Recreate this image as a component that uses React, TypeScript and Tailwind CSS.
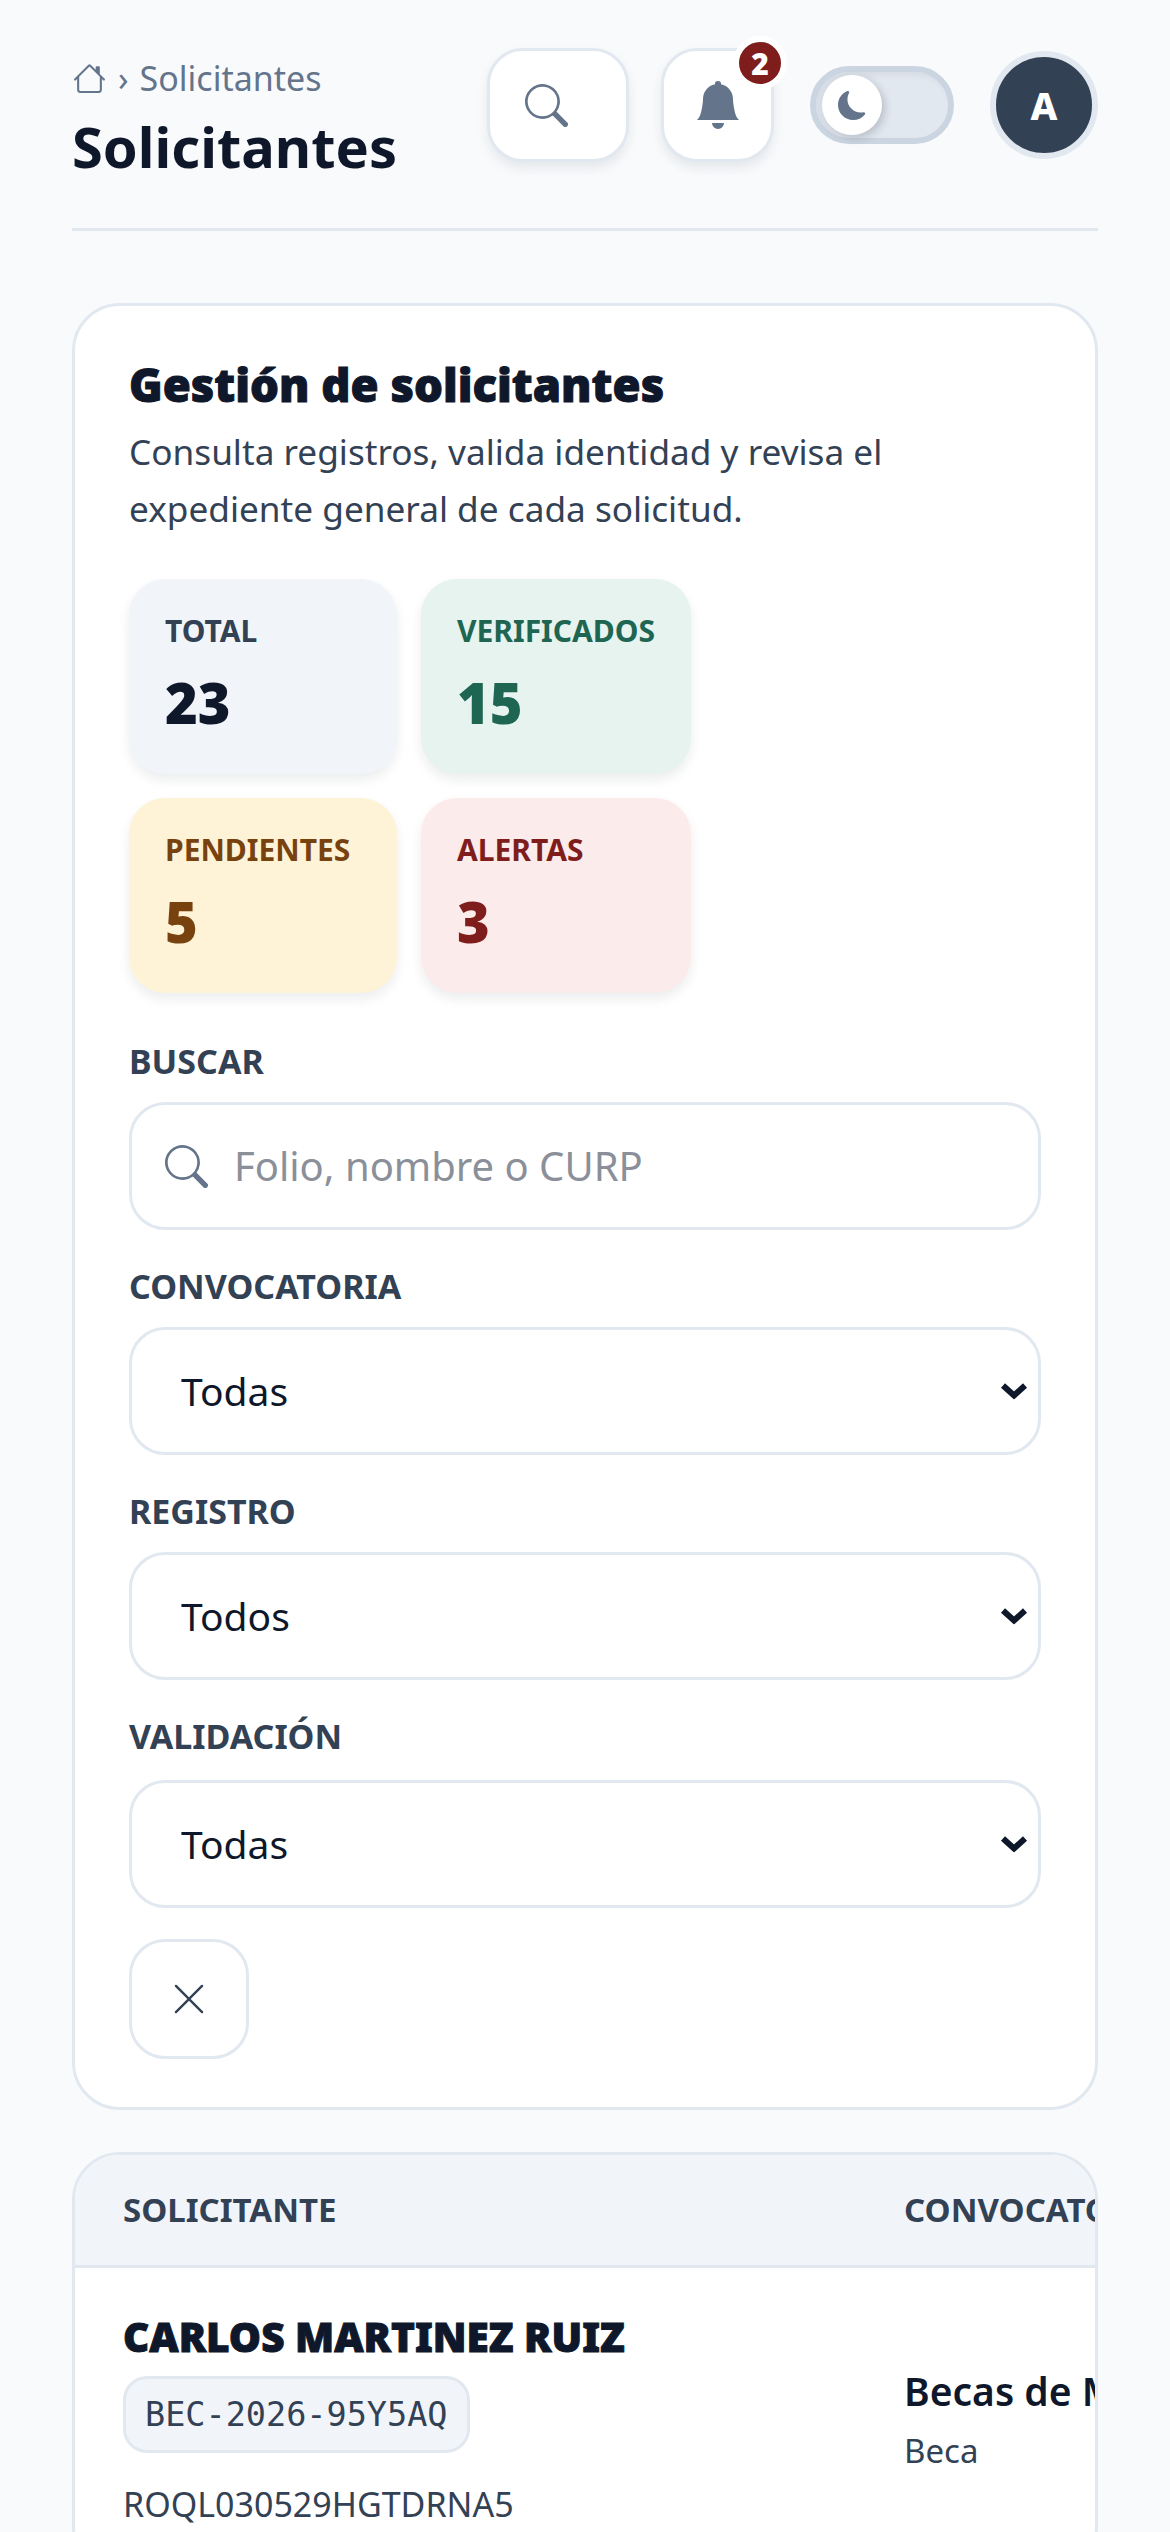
import React from 'react';
import { BsBellFill, BsHouse, BsMoonFill, BsSearch, BsXLg } from 'react-icons/bs';

const sans = { fontFamily: '"Noto Sans", "Open Sans", sans-serif' };

interface Stat {
  label: string;
  value: number;
  box: string;
  labelColor: string;
  valueColor: string;
}

const stats: Stat[] = [
  { label: 'TOTAL', value: 23, box: 'bg-[#f1f5f9]', labelColor: 'text-[#334155]', valueColor: 'text-[#0f172a]' },
  { label: 'VERIFICADOS', value: 15, box: 'bg-[#e6f3ee]', labelColor: 'text-[#1e6552]', valueColor: 'text-[#1e6552]' },
  { label: 'PENDIENTES', value: 5, box: 'bg-[#fef3d6]', labelColor: 'text-[#78420f]', valueColor: 'text-[#78420f]' },
  { label: 'ALERTAS', value: 3, box: 'bg-[#fcebeb]', labelColor: 'text-[#7f1d1d]', valueColor: 'text-[#7f1d1d]' },
];

const FieldLabel = ({ children, tall }: { children: React.ReactNode; tall?: boolean }) => (
  <label className={`block text-[34px] leading-[45px] font-bold text-[#334155] ${tall ? 'mb-[21px]' : 'mb-[18px]'}`}>
    {children}
  </label>
);

const SelectField = ({ label, value, tall }: { label: string; value: string; tall?: boolean }) => (
  <div className="mb-[34px]">
    <FieldLabel tall={tall}>{label}</FieldLabel>
    <div className="relative">
      <select
        defaultValue={value}
        className="appearance-none block w-full h-[128px] pl-[49px] pr-[60px] bg-white border-[3px] border-[#e2e8f0] rounded-[36px] text-[39px] text-[#0f172a] outline-none"
        style={sans}
      >
        <option>{value}</option>
      </select>
      {/* native-looking arrow, the built-in one doesn't scale with the text */}
      <svg
        viewBox="0 0 28 17"
        className="absolute right-[13px] top-1/2 -translate-y-1/2 w-[28px] h-[17px] text-[#0f172a] pointer-events-none"
      >
        <path d="M3 3 L14 13 L25 3" fill="none" stroke="currentColor" strokeWidth={6} />
      </svg>
    </div>
  </div>
);

const App: React.FC = () => {
  return (
    <div className="h-[2532px] overflow-hidden bg-[#f8fafc] px-[72px] pt-[48px]" style={sans}>
      <header className="flex justify-between items-start h-[183px] border-b-[3px] border-[#e2e8f0]">
        <div className="pt-[8px]">
          <div className="flex items-center h-[45px] text-[34px] text-[#64748b]">
            <BsHouse className="w-[33px] h-[33px] ml-[1px] mr-[12px]" />
            <span className="mr-[11px]">›</span>
            <span>Solicitantes</span>
          </div>
          <h1 className="text-[56px] leading-[78px] font-bold text-[#0f172a] mt-[6px]">Solicitantes</h1>
        </div>
        <div className="flex items-center">
          <button className="flex items-center w-[142px] h-[114px] pl-[35px] bg-white border-[3px] border-[#e2e8f0] rounded-[36px] shadow-[0_6px_12px_rgba(15,23,42,0.08)]">
            <BsSearch className="w-[43px] h-[43px] text-[#64748b]" />
          </button>
          <button className="relative flex items-center justify-center w-[113px] h-[114px] ml-[32px] bg-white border-[3px] border-[#e2e8f0] rounded-[36px] shadow-[0_6px_12px_rgba(15,23,42,0.08)]">
            <BsBellFill className="w-[48px] h-[48px] text-[#64748b]" />
            <span className="absolute -top-[15px] -right-[16px] flex items-center justify-center w-[54px] h-[54px] rounded-full bg-[#7f1d1d] border-[6px] border-white text-white text-[30px] font-black">
              2
            </span>
          </button>
          <div className="flex items-center w-[144px] h-[78px] ml-[36px] pl-[6px] bg-[#e2e8f0] border-[6px] border-[#cbd5e1] rounded-full shadow-[inset_3px_3px_6px_rgba(15,23,42,0.06)]">
            <span className="flex items-center justify-center w-[60px] h-[60px] rounded-full bg-white shadow-[3px_3px_9px_rgba(15,23,42,0.2)]">
              <BsMoonFill className="w-[29px] h-[29px] text-[#64748b]" />
            </span>
          </div>
          <div className="flex items-center justify-center w-[108px] h-[108px] ml-[36px] rounded-full bg-[#334155] border-[6px] border-[#e2e8f0] text-white text-[38px] font-extrabold">
            A
          </div>
        </div>
      </header>

      <section className="mt-[72px] bg-white border-[3px] border-[#e2e8f0] rounded-[48px] px-[54px] pt-[48px] pb-[48px]">
        <h2 className="text-[45.5px] leading-[60px] font-black text-[#0f172a] [-webkit-text-stroke:1px_#0f172a]">
          Gestión de solicitantes
        </h2>
        <p className="text-[35.2px] leading-[57px] text-[#334155] mt-[9px]">
          Consulta registros, valida identidad y revisa el expediente general de cada solicitud.
        </p>

        <div className="grid grid-cols-[268px_270px] gap-[24px] mt-[42px]">
          {stats.map((s) => (
            <div
              key={s.label}
              className={`${s.box} h-[195px] px-[36px] pt-[31px] rounded-[36px] shadow-[0_6px_12px_rgba(15,23,42,0.08)]`}
            >
              <div className={`${s.labelColor} text-[30px] leading-[42px] font-bold`}>{s.label}</div>
              <div className={`${s.valueColor} text-[56px] leading-[72px] font-black mt-[14px]`}>{s.value}</div>
            </div>
          ))}
        </div>

        <div className="mt-[46px] mb-[34px]">
          <FieldLabel>BUSCAR</FieldLabel>
          <div className="flex items-center h-[128px] pl-[33px] bg-white border-[3px] border-[#e2e8f0] rounded-[36px]">
            <BsSearch className="w-[43px] h-[43px] text-[#64748b] shrink-0" />
            <input
              placeholder="Folio, nombre o CURP"
              className="w-full ml-[26px] text-[40px] text-[#0f172a] placeholder:text-[#8a8f99] outline-none"
              style={sans}
            />
          </div>
        </div>

        <SelectField label="CONVOCATORIA" value="Todas" />
        <SelectField label="REGISTRO" value="Todos" />
        <SelectField label="VALIDACIÓN" value="Todas" tall />

        <button className="flex items-center justify-center w-[120px] h-[120px] -mt-[3px] bg-white border-[3px] border-[#e2e8f0] rounded-[36px]">
          <BsXLg className="w-[38px] h-[38px] text-[#334155]" />
        </button>
      </section>

      <section className="mt-[42px] bg-white border-[3px] border-[#e2e8f0] rounded-[48px] overflow-hidden">
        <table className="w-[1500px] table-fixed border-collapse">
          <thead>
            <tr className="h-[111px] bg-[#f1f5f9] border-b-[3px] border-[#e2e8f0] text-left text-[33px] text-[#334155]">
              <th className="w-[829px] pl-[48px] font-bold">SOLICITANTE</th>
              <th className="font-bold">CONVOCATORIA</th>
            </tr>
          </thead>
          <tbody>
            <tr>
              <td className="pl-[48px] pt-[42px] pb-[44px]">
                <div className="text-[40.5px] leading-[54px] font-black text-[#0f172a] [-webkit-text-stroke:1px_#0f172a]">
                  CARLOS MARTINEZ RUIZ
                </div>
                <span
                  className="inline-block mt-[12px] px-[19px] py-[11px] bg-[#f1f5f9] border-[3px] border-[#e2e8f0] rounded-[24px] text-[33.5px] leading-[49px] text-[#334155]"
                  style={{ fontFamily: '"DejaVu Sans Mono", monospace' }}
                >
                  BEC-2026-95Y5AQ
                </span>
                <div className="mt-[27px] text-[34px] leading-[48px] text-[#334155]">ROQL030529HGTDRNA5</div>
              </td>
              <td className="align-middle">
                <div className="text-[39px] leading-[54px] font-semibold text-[#0f172a]">Becas de Movilidad</div>
                <div className="text-[33px] leading-[48px] text-[#334155] mt-[9px]">Beca</div>
              </td>
            </tr>
          </tbody>
        </table>
      </section>
    </div>
  );
};

export default App;
